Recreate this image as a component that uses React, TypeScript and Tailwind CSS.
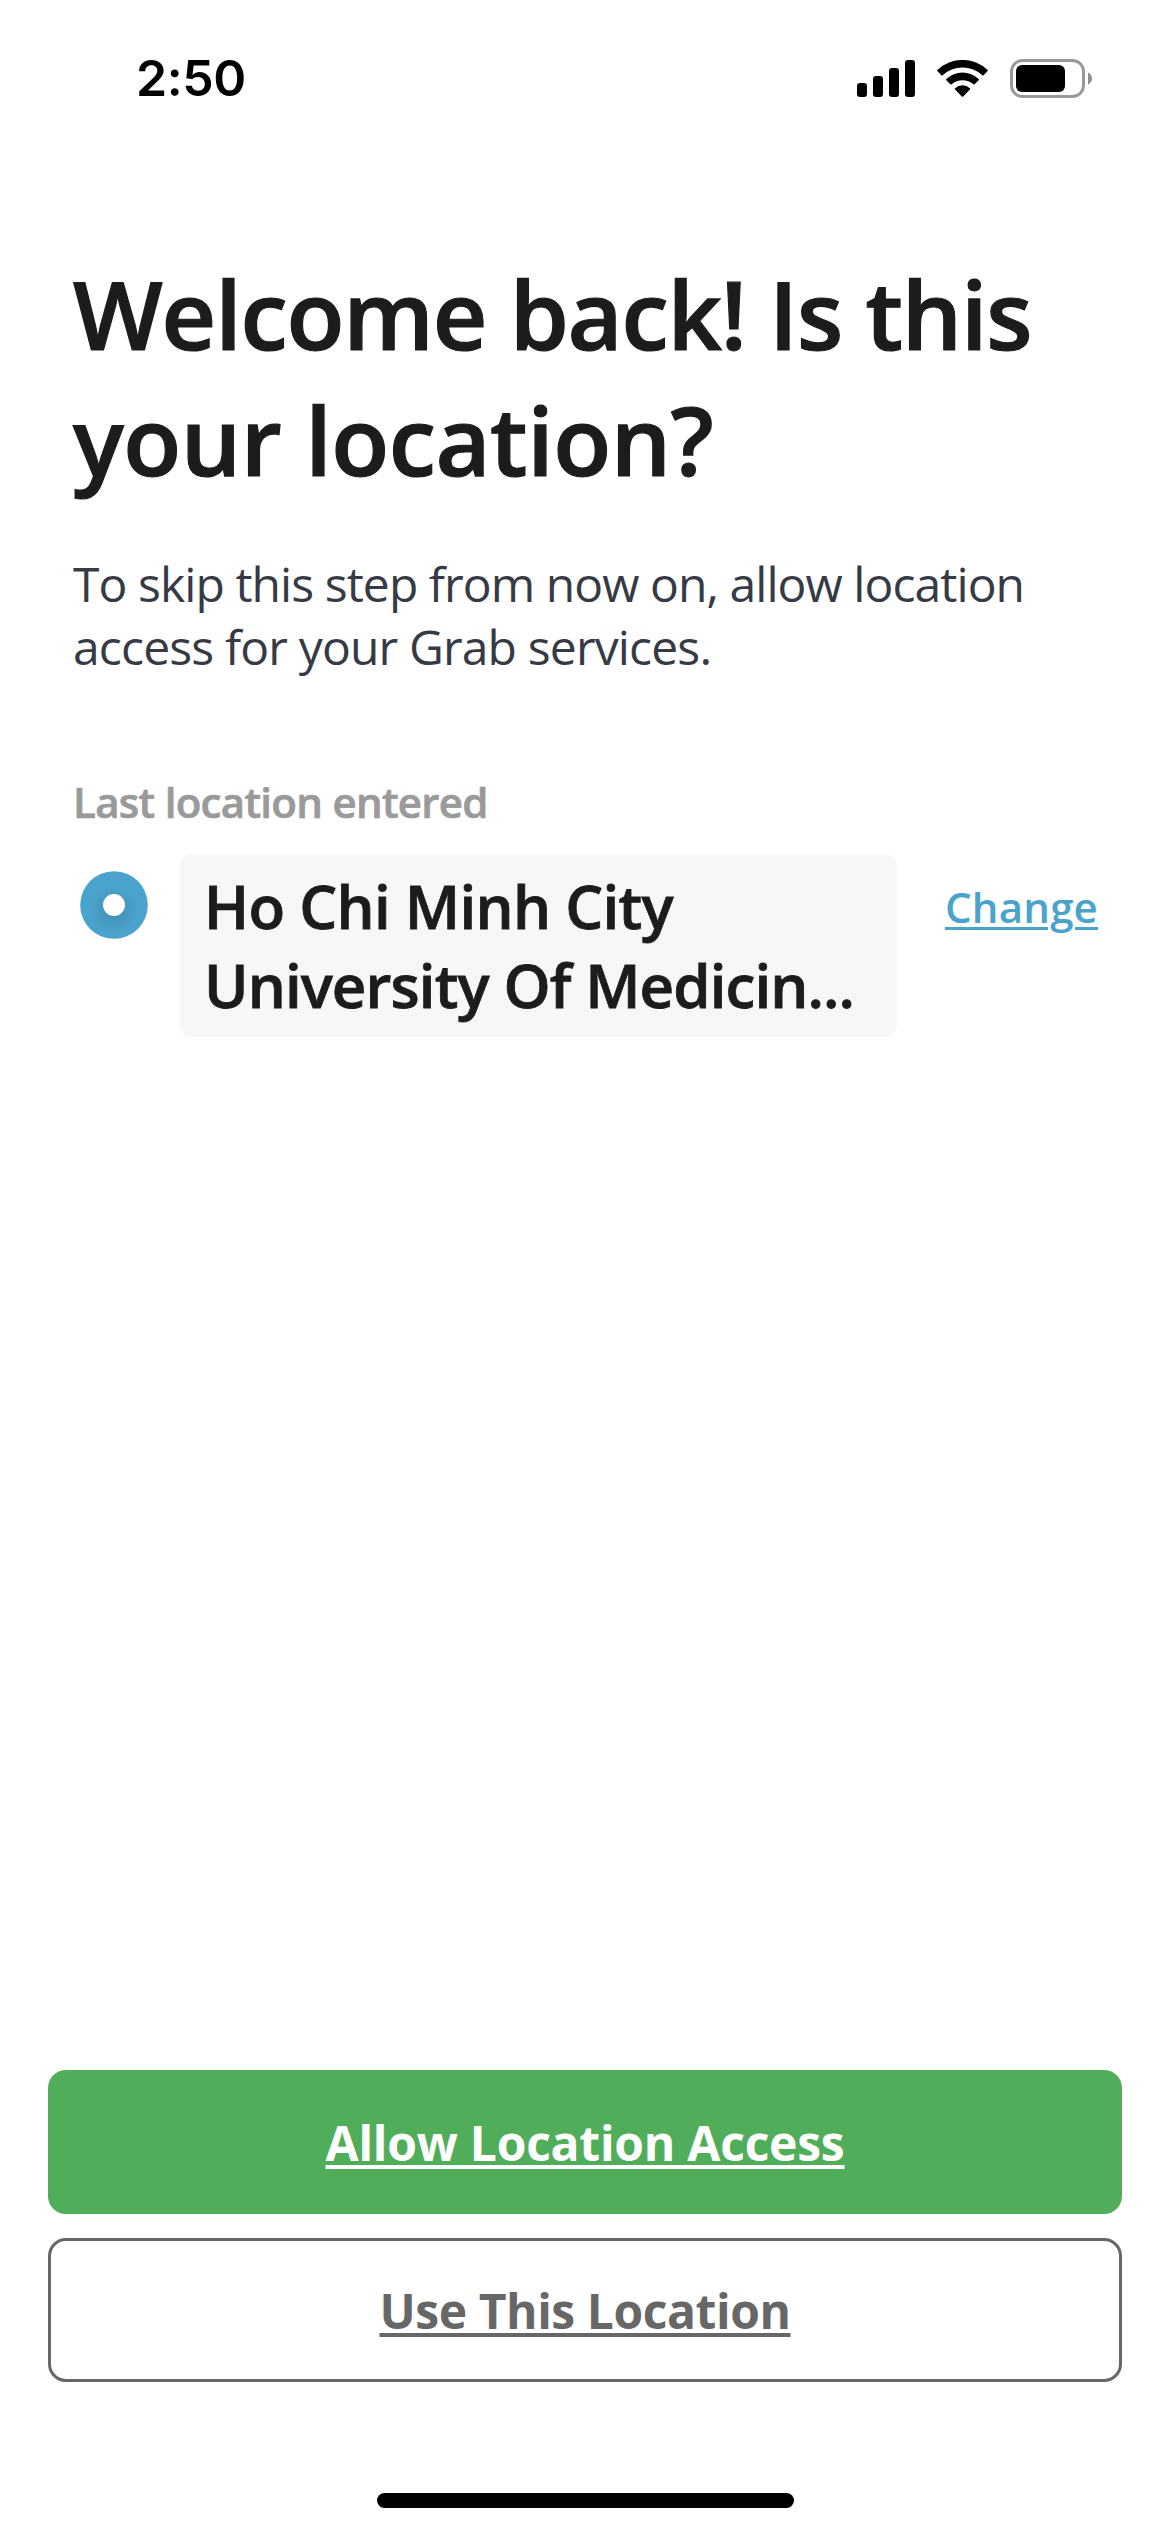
function SignalIcon() {
  return (
    <svg width="58" height="37" viewBox="0 0 58 37" fill="currentColor">
      <rect x="0" y="23" width="10" height="14" rx="3" />
      <rect x="16" y="16" width="10" height="21" rx="3" />
      <rect x="32" y="8" width="10" height="29" rx="3" />
      <rect x="48" y="0" width="10" height="37" rx="3" />
    </svg>
  );
}

function WifiIcon() {
  return (
    <svg width="51" height="37" viewBox="0 0 51 37" fill="currentColor">
      <path d="M.4 9.9A36.5 36.5 0 0 1 50.6 9.9Q51.2 10.5 50.6 11.1L46.6 15.2Q46 15.7 45.4 15.2A29.5 29.5 0 0 0 5.6 15.2Q5 15.7 4.4 15.2L.4 11.1Q-.2 10.5 .4 9.9Z" />
      <path d="M9.3 19A23.6 23.6 0 0 1 41.7 19Q42.3 19.6 41.7 20.2L37.6 24.3Q37 24.8 36.4 24.3A16.4 16.4 0 0 0 14.6 24.3Q14 24.8 13.4 24.3L9.3 20.2Q8.7 19.6 9.3 19Z" />
      <path d="M18.1 28.2A10.8 10.8 0 0 1 32.9 28.2Q33.5 28.8 32.9 29.4L26.2 36.4Q25.5 37 24.8 36.4L18.1 29.4Q17.5 28.8 18.1 28.2Z" />
    </svg>
  );
}

function BatteryIcon() {
  return (
    <svg width="82" height="39" viewBox="0 0 82 39">
      <rect x="1.5" y="1.5" width="72" height="36" rx="11" fill="none" stroke="#999999" strokeWidth="3" />
      <rect x="6" y="6" width="49" height="27" rx="6" fill="#000000" />
      <path d="M78 13.5C80.5 14.5 82 17 82 19.5S80.5 24.5 78 25.5Z" fill="#8e8e8e" />
    </svg>
  );
}

function StatusBar() {
  return (
    <header className="flex h-[156px] items-center justify-between pr-[78px] pl-[136px] text-black">
      <span className="font-['Inter',sans-serif] text-[50px] leading-[60px] font-[560] tracking-[-0.4px]">2:50</span>
      <div className="flex items-center">
        <SignalIcon />
        <span className="ml-[22px]">
          <WifiIcon />
        </span>
        <span className="ml-[22px]">
          <BatteryIcon />
        </span>
      </div>
    </header>
  );
}

function LocationDot() {
  return (
    <svg width="68" height="68" viewBox="0 0 68 68">
      <defs>
        <radialGradient id="dotShade" cx="34" cy="39" r="24" gradientUnits="userSpaceOnUse">
          <stop offset="0.4" stopColor="#4595bb" />
          <stop offset="1" stopColor="#4aa3cc" />
        </radialGradient>
      </defs>
      <circle cx="34" cy="34" r="33.8" fill="url(#dotShade)" />
      <circle cx="34" cy="34" r="11" fill="#ffffff" />
    </svg>
  );
}

export default function App() {
  return (
    <div className="flex h-[2532px] w-[1170px] flex-col bg-white font-['Open_Sans','Noto_Sans',sans-serif] whitespace-nowrap">
      <StatusBar />

      <main className="flex flex-1 flex-col pt-[94px] pl-[73px]">
        <h1 className="text-[95px] leading-[126px] font-semibold text-[#1c1c1c] [-webkit-text-stroke:1.2px_#1c1c1c]">
          <span className="block tracking-[-1.2px]">Welcome back! Is this</span>
          <span className="block tracking-[-0.5px]">your location?</span>
        </h1>

        <p className="mt-[50px] text-[48px] leading-[63px] text-[#363a45]">
          <span className="block tracking-[-0.93px]">To skip this step from now on, allow location</span>
          <span className="block tracking-[-0.84px]">access for your Grab services.</span>
        </p>

        <p className="mt-[97px] text-[42px] leading-[54px] font-semibold tracking-[-0.7px] text-[#9a9a9a] [-webkit-text-stroke:0.7px_#9a9a9a]">
          Last location entered
        </p>

        <div className="mt-[25px] flex items-start">
          <span className="mt-[17px] ml-[7px]">
            <LocationDot />
          </span>
          <div className="ml-8 h-[183px] w-[717px] rounded-xl bg-[#f7f7f7] pt-[13px] pl-6 text-[60px] leading-[79px] font-semibold text-[#1c1c1c] [-webkit-text-stroke:0.8px_#1c1c1c]">
            <span className="block tracking-[-0.7px]">Ho Chi Minh City</span>
            <span className="block tracking-[-0.9px]">University Of Medicin...</span>
          </div>
          <button className="mt-[26px] ml-12 text-[42px] leading-[54px] font-semibold tracking-[0.2px] text-[#4aa3cc] underline decoration-[3px] underline-offset-[4px]">
            Change
          </button>
        </div>
      </main>

      <footer className="flex flex-col items-center gap-6 px-12">
        <button className="h-36 w-full rounded-[18px] bg-[#50ae5b] pt-px text-[48px] font-bold tracking-[-0.24px] text-white underline decoration-[4px] underline-offset-[4px]">
          Allow Location Access
        </button>
        <button className="h-36 w-full rounded-[18px] border-[3px] border-[#676767] pt-px text-[48px] font-bold tracking-[-0.44px] text-[#676767] underline decoration-[4px] underline-offset-[4px]">
          Use This Location
        </button>
        <div className="mt-[87px] mb-6 h-[15px] w-[417px] rounded-full bg-black" />
      </footer>
    </div>
  );
}
